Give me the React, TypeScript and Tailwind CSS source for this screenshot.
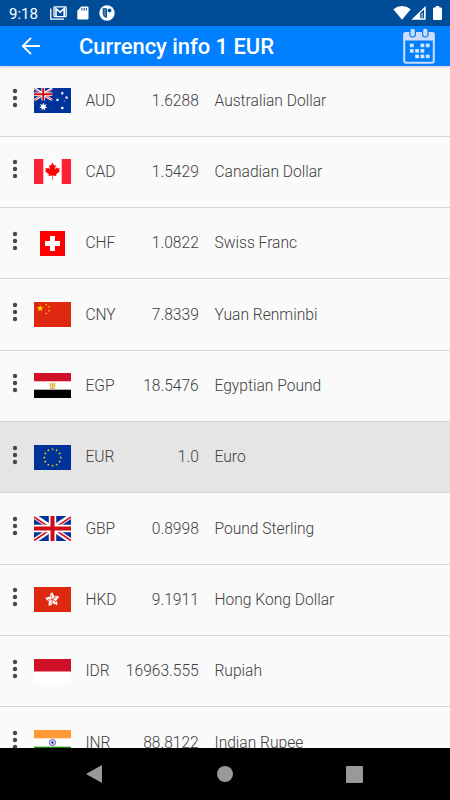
import type { ReactNode } from 'react';

interface Currency {
  code: string;
  rate: string;
  name: string;
  flag: ReactNode;
}

function starPoints(cx: number, cy: number, r: number, tips = 5, inner = 0.4) {
  return Array.from({ length: tips * 2 }, (_, i) => {
    const radius = i % 2 === 0 ? r : r * inner;
    const a = (Math.PI * i) / tips - Math.PI / 2;
    return `${(cx + radius * Math.cos(a)).toFixed(2)},${(cy + radius * Math.sin(a)).toFixed(2)}`;
  }).join(' ');
}

function Star({ x, y, r, tips, inner, fill }: { x: number; y: number; r: number; tips?: number; inner?: number; fill: string }) {
  return <polygon points={starPoints(x, y, r, tips, inner)} fill={fill} />;
}

function Flag({ children }: { children: ReactNode }) {
  return (
    <svg viewBox="0 0 37 25" className="w-[37px] h-[25px] block overflow-hidden">
      {children}
    </svg>
  );
}

function UnionJack() {
  return (
    <>
      <rect width="37" height="25" fill="#003399" />
      <path d="M0 0L37 25M37 0L0 25" stroke="#fff" strokeWidth="5" />
      <path d="M0 1L17 12.5M37 1L20 12.5M0 24.6L17 13M37 24.6L20 13" stroke="#d8141f" strokeWidth="1.7" />
      <path d="M18.5 0V25M0 12.5H37" stroke="#fff" strokeWidth="7.4" />
      <path d="M18.5 0V25M0 12.5H37" stroke="#d20a14" strokeWidth="4" />
    </>
  );
}

const australia = (
  <Flag>
    <rect width="37" height="25" fill="#003399" />
    <svg width="18.5" height="12.5" viewBox="0 0 37 25" preserveAspectRatio="none"><UnionJack /></svg>
    <Star x={9.3} y={18.7} r={4.2} tips={7} inner={0.48} fill="#fff" />
    <Star x={28.3} y={5.2} r={1.6} tips={7} inner={0.6} fill="#fff" />
    <Star x={23.5} y={11.8} r={1.6} tips={7} inner={0.6} fill="#fff" />
    <Star x={32.6} y={9.6} r={1.6} tips={7} inner={0.6} fill="#fff" />
    <Star x={28.3} y={20} r={1.7} tips={7} inner={0.6} fill="#fff" />
    <Star x={30.3} y={13} r={0.9} fill="#fff" />
  </Flag>
);

const canada = (
  <Flag>
    <rect width="37" height="25" fill="#fff" />
    <rect width="9.3" height="25" fill="#fa2336" />
    <rect x="27.7" width="9.3" height="25" fill="#fa2336" />
    <path
      d="M18.5 3.6L16.9 6.6L15.2 5.8L16 10.4L14 8.3L13.6 9.4L11.3 9L12 11.5L10.9 12L15 15.4L14.5 17.1L18.2 16.6V21H18.8V16.6L22.5 17.1L22 15.4L26.1 12L25 11.5L25.7 9L23.4 9.4L23 8.3L21 10.4L21.8 5.8L20.1 6.6Z"
      fill="#ff0000"
    />
  </Flag>
);

const switzerland = (
  <Flag>
    <rect x="6" width="25" height="25" fill="#ff0000" />
    <path d="M18.5 5V20M11 12.5H26" stroke="#fff" strokeWidth="5" />
  </Flag>
);

const china = (
  <Flag>
    <rect width="37" height="25" fill="#de2910" />
    <Star x={6.2} y={6.4} r={3.6} fill="#ffde00" />
    <Star x={12.3} y={2.5} r={1.2} fill="#ffde00" />
    <Star x={15} y={5} r={1.2} fill="#ffde00" />
    <Star x={15} y={8.7} r={1.2} fill="#ffde00" />
    <Star x={12.3} y={11.3} r={1.2} fill="#ffde00" />
  </Flag>
);

const egypt = (
  <Flag>
    <rect width="37" height="25" fill="#fff" />
    <rect width="37" height="8.3" fill="#ce1126" />
    <rect y="16.7" width="37" height="8.3" fill="#000" />
    <path d="M15.5 9.8L17.5 10.6V14.5H15.8ZM21.5 9.8L19.5 10.6V14.5H21.2Z" fill="#e3bd50" />
    <path d="M18.5 9.6V15" stroke="#dcb548" strokeWidth="1.3" />
    <path d="M15.8 15.6H21.2" stroke="#dcb548" strokeWidth="1" />
  </Flag>
);

const europe = (
  <Flag>
    <rect width="37" height="25" fill="#003399" />
    {Array.from({ length: 12 }, (_, i) => {
      const a = (Math.PI * i) / 6;
      return <Star key={i} x={18.5 + 8.3 * Math.sin(a)} y={12.5 - 8.3 * Math.cos(a)} r={1.3} inner={0.5} fill="#f5cd14" />;
    })}
  </Flag>
);

const britain = <Flag><UnionJack /></Flag>;

// Five petals around the centre of the flag
const hongKong = (
  <Flag>
    <rect width="37" height="25" fill="#de2910" />
    {[0, 72, 144, 216, 288].map(deg => (
      <g key={deg} transform={`rotate(${deg} 18.5 12.5)`}>
        <path d="M18.3 12C15.2 10.2 15.3 6 18.7 5.3C18 7 20.8 7.6 20.2 9.7C19.9 11 19 11.3 18.3 12Z" fill="#fff" />
        <path d="M18.4 11.6C17.2 10.5 17 9 17.6 7.8" stroke="#de2910" strokeWidth="0.7" fill="none" />
      </g>
    ))}
  </Flag>
);

const indonesia = (
  <Flag>
    <rect width="37" height="25" fill="#fff" />
    <rect width="37" height="12.5" fill="#ce1126" />
  </Flag>
);

const india = (
  <Flag>
    <rect width="37" height="25" fill="#fff" />
    <rect width="37" height="8.3" fill="#ff9933" />
    <rect y="16.7" width="37" height="8.3" fill="#128807" />
    <circle cx="18.5" cy="12.5" r="3.1" fill="#dcdcf4" stroke="#4343ad" strokeWidth="0.8" />
    <circle cx="18.5" cy="12.5" r="1.2" fill="#2e2ea0" />
  </Flag>
);

const currencies: Currency[] = [
  { code: 'AUD', rate: '1.6288', name: 'Australian Dollar', flag: australia },
  { code: 'CAD', rate: '1.5429', name: 'Canadian Dollar', flag: canada },
  { code: 'CHF', rate: '1.0822', name: 'Swiss Franc', flag: switzerland },
  { code: 'CNY', rate: '7.8339', name: 'Yuan Renminbi', flag: china },
  { code: 'EGP', rate: '18.5476', name: 'Egyptian Pound', flag: egypt },
  { code: 'EUR', rate: '1.0', name: 'Euro', flag: europe },
  { code: 'GBP', rate: '0.8998', name: 'Pound Sterling', flag: britain },
  { code: 'HKD', rate: '9.1911', name: 'Hong Kong Dollar', flag: hongKong },
  { code: 'IDR', rate: '16963.555', name: 'Rupiah', flag: indonesia },
  { code: 'INR', rate: '88.8122', name: 'Indian Rupee', flag: india },
];

function StatusBar() {
  return (
    <div className="h-[26px] shrink-0 bg-[#004c97] flex items-center pl-[9px] pr-2 text-white">
      <span className="w-[41px] text-[15px] leading-none pt-[3px]">9:18</span>
      <svg viewBox="0 0 17 14" className="w-[17px] h-[14px]" fill="none" stroke="#fff">
        <path d="M0.8 2.5V13.2H14" strokeWidth="1.3" />
        <rect x="4" y="0.9" width="12.2" height="9.8" rx="0.8" strokeWidth="1.3" />
        <path d="M6 10.5V2.7L10.1 6.2L14.2 2.7V10.5" strokeWidth="1.6" />
      </svg>
      <svg viewBox="0 0 12 14" className="w-[12px] h-[14px] ml-[10px]">
        <path d="M4.3 0.5H10.3Q11.5 0.5 11.5 1.7V12.3Q11.5 13.5 10.3 13.5H1.5Q0.3 13.5 0.3 12.3V4.8Z" fill="#fff" />
        <path d="M5 2V4.6M7.2 2V4.6M9.4 2V4.6" stroke="#004c97" strokeWidth="1" />
      </svg>
      <svg viewBox="0 0 16 16" className="w-[16px] h-[16px] ml-[10px]">
        <circle cx="8" cy="8" r="7.7" fill="#fff" />
        <path d="M4.2 3.8H7.4V12.2Q4.4 11.6 4.2 8Z" fill="#4f7fb4" stroke="#004c97" strokeWidth="1.1" />
        <circle cx="10.5" cy="5.4" r="1.9" fill="#004c97" />
      </svg>
      <div className="flex-1" />
      <svg viewBox="0 0 18 14" className="w-[18px] h-[14px]">
        <path d="M0.3 3.3Q9 -3.2 17.7 3.3L9 13.8Z" fill="#fff" />
      </svg>
      <svg viewBox="0 0 15 14" className="w-[15px] h-[14px]">
        <path d="M0.3 13.7L14.7 0V13.7Z" fill="#fff" />
        <path d="M9.2 7L13 3.6V12.2H9.2Z" fill="#004c97" />
        <path d="M11.1 7V12.2" stroke="#fff" strokeWidth="0.9" />
      </svg>
      <svg viewBox="0 0 9 14" className="w-[9px] h-[14px] ml-[7px]">
        <path d="M2.7 0H6.3V1.4H8Q9 1.4 9 2.4V13Q9 14 8 14H1Q0 14 0 13V2.4Q0 1.4 1 1.4H2.7Z" fill="#fff" />
      </svg>
    </div>
  );
}

function Calendar() {
  const cells = [[1, 0], [3, 0], [4, 0], [1, 1], [2, 1], [3, 1], [2, 2], [3, 2], [4, 2]];
  return (
    <svg viewBox="0 0 32 36" className="w-[32px] h-[36px]">
      <rect x="1.2" y="5" width="29.6" height="29.8" rx="2" fill="#0080ff" stroke="#cddcf8" strokeWidth="2" />
      <rect x="0.5" y="4.2" width="31" height="8.4" rx="1.5" fill="#cddcf8" />
      <rect x="7" y="0.2" width="5.4" height="8.8" rx="2.4" fill="#cddcf8" stroke="#0080ff" strokeWidth="1.2" />
      <rect x="19.6" y="0.2" width="5.4" height="8.8" rx="2.4" fill="#cddcf8" stroke="#0080ff" strokeWidth="1.2" />
      {cells.map(([c, r]) => (
        <rect key={`${c}-${r}`} x={1.6 + c * 5.3} y={15.6 + r * 5.5} width="3.8" height="3.6" fill="#d8e6fb" />
      ))}
    </svg>
  );
}

function AppBar() {
  return (
    <header className="relative h-[39.5px] shrink-0 bg-[#0080ff] flex items-center pl-[21px] pr-[15px] text-white shadow-[0_1px_3px_rgba(0,0,0,0.2)]">
      <svg viewBox="0 0 20 18" className="w-[20px] h-[18px]" fill="none" stroke="#fff" strokeWidth="1.9">
        <path d="M19 9H2M10 0.8L1.8 9L10 17.2" />
      </svg>
      <h1 className="flex-1 ml-[38px] pt-[3px] text-[22px] leading-none font-medium tracking-[-0.05px]">Currency info 1 EUR</h1>
      <Calendar />
    </header>
  );
}

function CurrencyRow({ item }: { item: Currency }) {
  const selected = item.code === 'EUR';
  return (
    <li className={`h-[71.3px] shrink-0 flex items-center border-b border-[#d6d6d6] text-[15.6px] font-light text-[#404040] ${selected ? 'bg-[#e5e5e5]' : ''}`}>
      <svg viewBox="0 0 6 20" className="w-[6px] h-[20px] ml-[12.3px] mb-[5px]" fill="#484848">
        <circle cx="3" cy="3" r="2.2" />
        <circle cx="3" cy="10" r="2.2" />
        <circle cx="3" cy="17" r="2.2" />
      </svg>
      <div className="ml-[15.7px]">{item.flag}</div>
      <span className="w-[34px] ml-[14.4px] pt-[1.9px]">{item.code}</span>
      <span className="w-20 text-right pt-[1.9px] -ml-[0.6px]">{item.rate}</span>
      <span className="ml-[15.7px] pt-[1.9px]">{item.name}</span>
    </li>
  );
}

function NavigationBar() {
  return (
    <nav className="h-[52px] shrink-0 bg-black flex items-center pl-[86px] pr-[87px] justify-between">
      <svg viewBox="0 0 16 18" className="w-[16px] h-[18px]">
        <path d="M0 9L16 0V18Z" fill="#999" />
      </svg>
      <div className="w-4 h-4 rounded-full bg-[#999] ml-px" />
      <div className="w-[17px] h-[17px] rounded-[1px] bg-[#999]" />
    </nav>
  );
}

export default function App() {
  return (
    <div className="w-[450px] h-[800px] overflow-hidden flex flex-col bg-[#fafafa] font-[Roboto,sans-serif]">
      <StatusBar />
      <AppBar />
      <ul className="flex-1 min-h-0 overflow-hidden flex flex-col">
        {currencies.map(item => (
          <CurrencyRow key={item.code} item={item} />
        ))}
      </ul>
      <NavigationBar />
    </div>
  );
}
